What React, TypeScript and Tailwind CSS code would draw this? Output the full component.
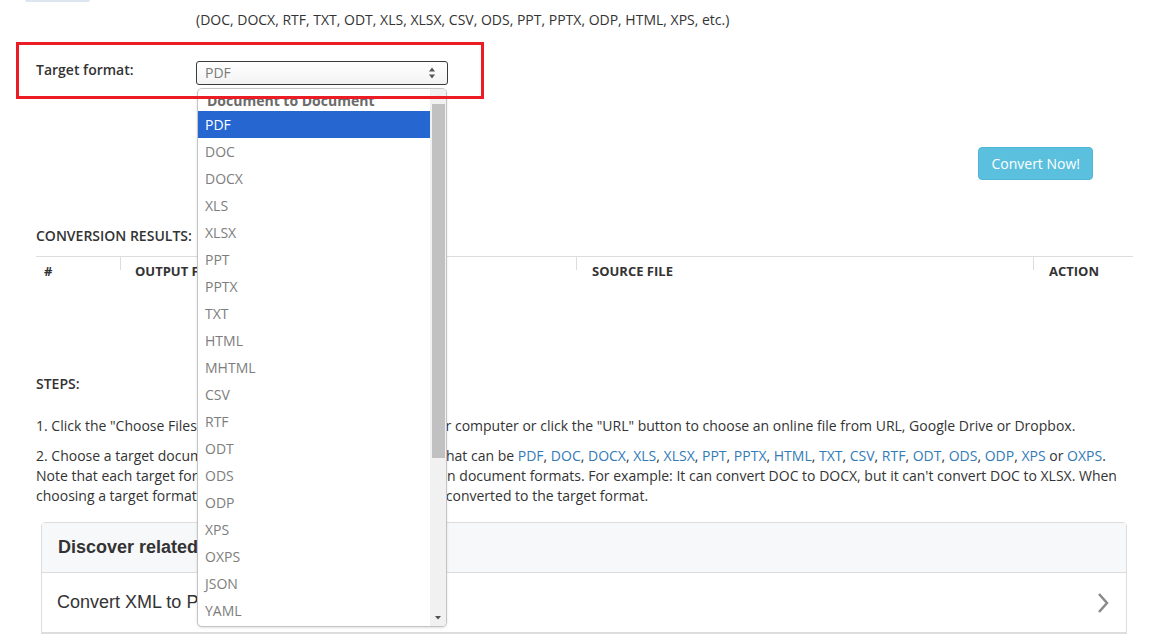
import React from "react";

const formats = [
  "PDF", "DOC", "DOCX", "XLS", "XLSX", "PPT", "PPTX", "TXT", "HTML", "MHTML",
  "CSV", "RTF", "ODT", "ODS", "ODP", "XPS", "OXPS", "JSON", "YAML",
];

const linked = [
  "PDF", "DOC", "DOCX", "XLS", "XLSX", "PPT", "PPTX", "HTML", "TXT", "CSV",
  "RTF", "ODT", "ODS", "ODP", "XPS",
];

function FormatList() {
  return (
    <div className="absolute left-[197px] top-[88px] z-10 h-[539px] w-[250px] overflow-hidden rounded-[5px] border border-[#c4c4c4] bg-white shadow-sm">
      <div className="h-[22px] pl-[9px] text-[14px] font-bold leading-[24px] text-[#6b6b6b]">
        Document to Document
      </div>
      {formats.map((f, i) => (
        <div
          key={f}
          className={
            i === 0
              ? "mr-[16px] h-[27px] bg-[#2566d0] pl-[7px] leading-[27px] text-white"
              : "mr-[16px] h-[27px] pl-[7px] leading-[27px] text-[#7d7d7d]"
          }
        >
          {f}
        </div>
      ))}
      {/* scrollbar */}
      <div className="absolute right-0 top-0 flex h-full w-[16px] flex-col items-center bg-[#f1f1f1]">
        <svg width="8" height="14" viewBox="0 0 8 14" className="mt-[1px]">
          <path d="M1 9 L4 5.5 L7 9 Z" fill="#a3a3a3" />
        </svg>
        <div className="h-[354px] w-[13px] bg-[#c1c1c1]" />
        <div className="flex-1" />
        <svg width="8" height="14" viewBox="0 0 8 14" className="mb-[1px]">
          <path d="M1 5 L4 8.5 L7 5 Z" fill="#505050" />
        </svg>
      </div>
    </div>
  );
}

export default function App() {
  return (
    <div className="relative h-[635px] w-[1160px] overflow-hidden bg-white font-['Open_Sans',sans-serif] text-[14px] text-[#333]">
      <div className="ml-[25px] h-[2px] w-[65px] rounded-b bg-[#dde5ee]" />
      <p className="ml-[196px] mt-[8px] leading-[20px]">
        (DOC, DOCX, RTF, TXT, ODT, XLS, XLSX, CSV, ODS, PPT, PPTX, ODP, HTML, XPS, etc.)
      </p>

      {/* target format row */}
      <div className="mt-[31px] flex h-[24px] items-start">
        <label className="-mt-[1px] ml-[36px] w-[160px] font-semibold leading-[20px]">
          Target format:
        </label>
        <div className="flex h-[24px] w-[252px] items-center justify-between rounded-[3px] border border-[#3a3a3a] bg-gradient-to-b from-white to-[#f3f3f3] pl-[8px] pr-[11px] text-[#7a7a7a]">
          <span className="leading-[20px]">PDF</span>
          <svg width="8" height="14" viewBox="0 0 8 14">
            <path d="M1 5.5 L4 1.5 L7 5.5 Z" fill="#555" />
            <path d="M1 8.5 L4 12.5 L7 8.5 Z" fill="#555" />
          </svg>
        </div>
      </div>

      <div className="mt-[62px] flex justify-end pr-[67px]">
        <button className="h-[33px] rounded-[4px] border border-[#4fb6d6] bg-[#5bc0de] px-[12px] text-[14px] text-white">
          Convert Now!
        </button>
      </div>

      <div className="ml-[36px] mr-[27px]">
        <div className="mt-[46px] font-semibold leading-[20px]">CONVERSION RESULTS:</div>
        <div className="mt-[10px] grid w-[1097px] grid-cols-[84px_456px_457px_100px] border-t border-[#dddddd] text-[13px] font-bold">
          <div className="h-[29px] pl-[8px] leading-[28px]">#</div>
          <div className="relative h-[29px] pl-[15px] leading-[28px]">
            <span className="absolute left-0 top-0 h-[13px] w-px bg-[#dddddd]" />
            OUTPUT FILE
          </div>
          <div className="relative h-[29px] pl-[16px] leading-[28px]">
            <span className="absolute left-0 top-0 h-[13px] w-px bg-[#dddddd]" />
            SOURCE FILE
          </div>
          <div className="relative h-[29px] pl-[16px] leading-[28px]">
            <span className="absolute left-0 top-0 h-[13px] w-px bg-[#dddddd]" />
            ACTION
          </div>
        </div>

        <div className="mt-[88px] font-semibold leading-[20px]">STEPS:</div>
        <p className="mt-[22px] leading-[20px]">
          1. Click the "Choose Files" button to browse local files from your computer or click the "URL" button to choose an online file from URL, Google Drive or Dropbox.
        </p>
        <p className="mt-[10px] leading-[20px]">
          2. Choose a target document format, target document format that can be{" "}
          {linked.map((l, i) => (
            <React.Fragment key={l}>
              <a className="text-[#337ab7]">{l}</a>
              {i < linked.length - 1 ? ", " : ""}
            </React.Fragment>
          ))}{" "}
          or <a className="text-[#337ab7]">OXPS</a>.
          <br />
          Note that each target format allows converting only from certain document formats. For example: It can convert DOC to DOCX, but it can't convert DOC to XLSX. When
          <br />
          choosing a target format, make sure that the input files can be converted to the target format.
        </p>
      </div>

      {/* related card */}
      <div className="ml-[41px] mt-[16px] w-[1086px] rounded-t-[4px] border border-[#dddddd] font-['Liberation_Sans',Arial,sans-serif] text-[18px]">
        <div className="flex h-[50px] items-center border-b border-[#dddddd] bg-[#f7f8fa] pl-[16px] font-bold text-[#333]">
          Discover related conversions
        </div>
        <div className="flex h-[60px] items-center justify-between border-b border-[#dddddd] pl-[15px] pr-[16px] text-[#333]">
          <span>Convert XML to PDF</span>
          <svg width="14" height="22" viewBox="0 0 14 22">
            <polyline points="3,2 11,11 3,20" fill="none" stroke="#8a8a8a" strokeWidth="2.5" />
          </svg>
        </div>
      </div>

      <FormatList />

      {/* highlight annotation */}
      <div className="pointer-events-none absolute left-[16px] top-[42px] z-20 h-[57px] w-[468px] border-[3px] border-[#ec1c24]" />
    </div>
  );
}
